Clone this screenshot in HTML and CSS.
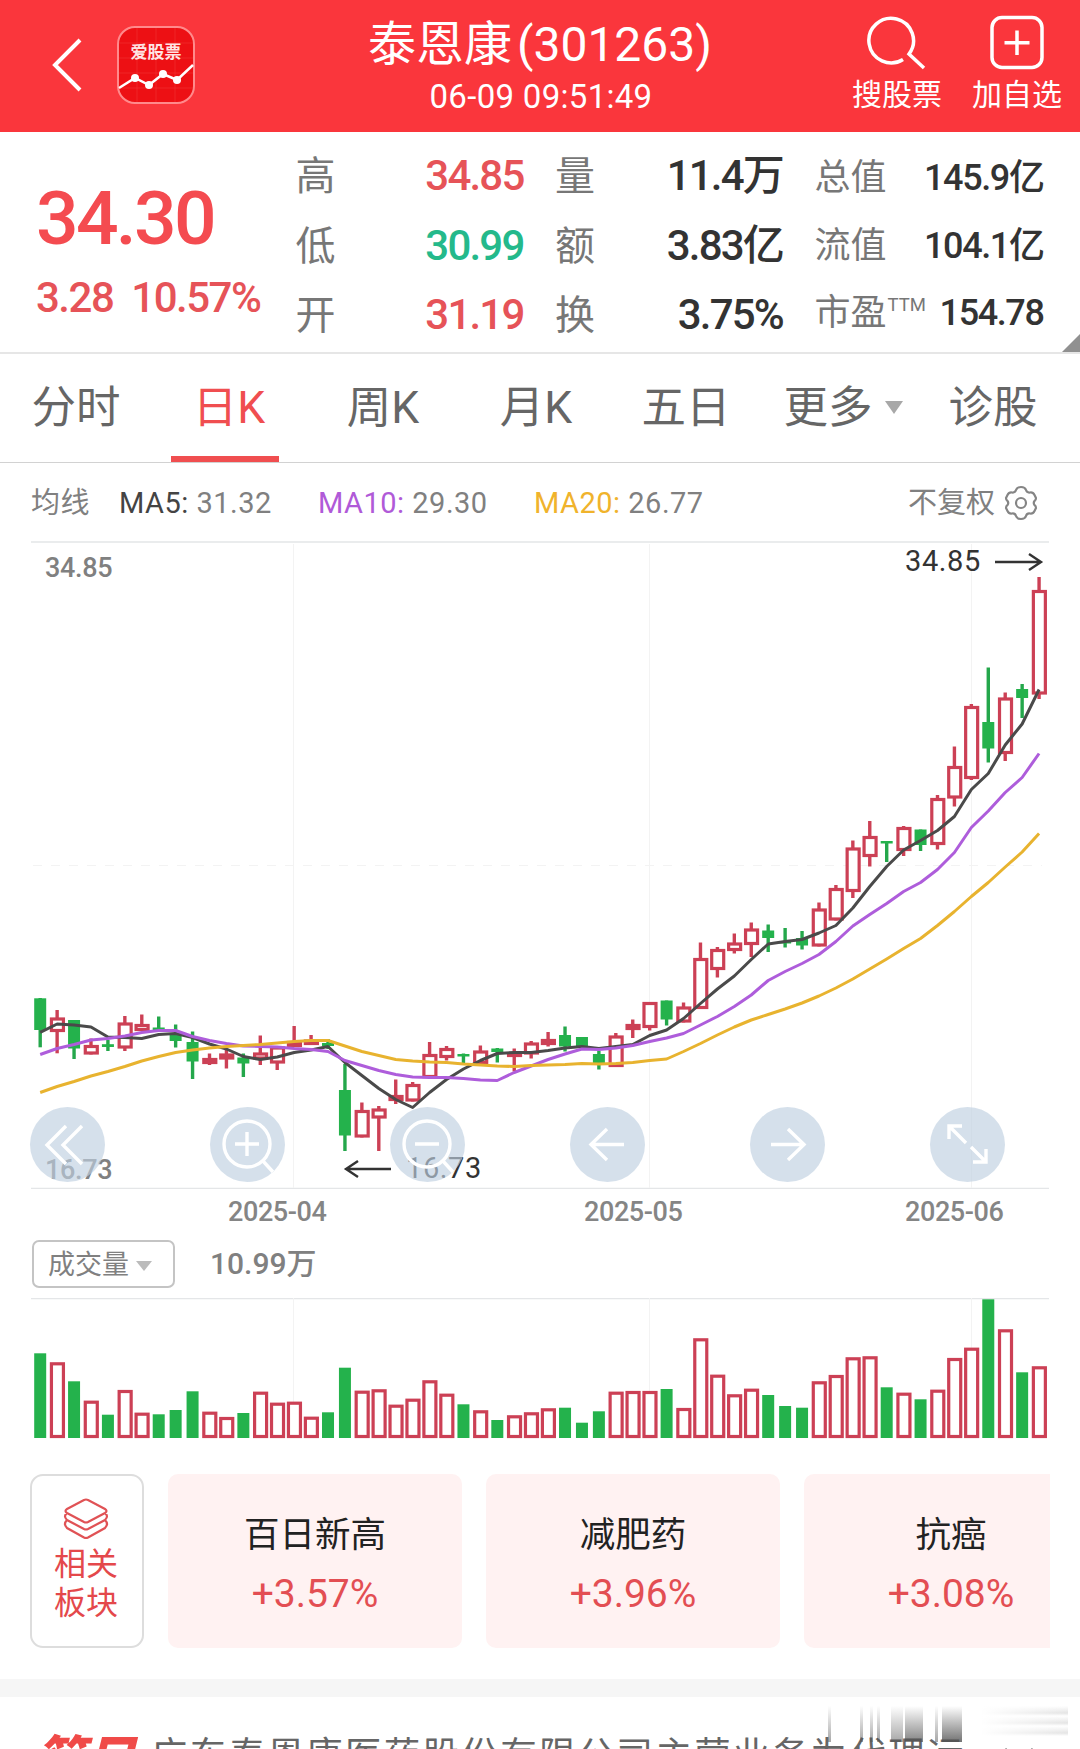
FILE: index.html
```html
<!DOCTYPE html>
<html lang="zh-CN">
	<head>
		<meta charset="utf-8">
		<title>泰恩康(301263)</title>
		<link rel="stylesheet" href="styles.css">
	</head>
	<body>
		<header class="top">
			<div class="top_left">
				<svg class="back" width="30" height="54" viewBox="0 0 30 54"><path d="M28 2L3 27L28 52"/></svg>
				<svg class="app_icon" width="78" height="78" viewBox="0 0 78 78">
					<rect class="app_bg" x="1" y="1" width="76" height="76" rx="17"/>
					<path class="app_grid" d="M20 2V76M39 2V76M58 2V76M2 17H76M2 32H76M2 47H76M2 62H76"/>
					<text x="39" y="32" text-anchor="middle">爱股票</text>
					<path class="app_line" d="M2 62L18 52L32 59L46 48L60 54L76 39"/>
					<g class="app_dots"><circle cx="18" cy="52" r="4"/><circle cx="32" cy="59" r="4"/><circle cx="46" cy="48" r="4"/><circle cx="60" cy="54" r="4"/></g>
				</svg>
			</div>
			<div class="top_title">
				<h1>泰恩康<span>(301263)</span></h1>
				<div class="time">06-09 09:51:49</div>
			</div>
			<div class="top_right">
				<div class="action">
					<svg width="60" height="60" viewBox="0 0 60 60"><path d="M36 45.500A22.300 22.300 0 1 1 42 40L57 54"/></svg>
					搜股票
				</div>
				<div class="action">
					<svg width="60" height="60" viewBox="0 0 60 60"><rect x="5" y="3.500" width="50" height="50" rx="10"/><path d="M30 16.500V41M17.500 28.700H42.500"/></svg>
					加自选
				</div>
			</div>
		</header>

		<section class="quote">
			<div class="price">
				<div class="last">34.30</div>
				<div class="change"><span>3.28</span><span>10.57%</span></div>
			</div>
			<dl>
				<div><dt>高</dt><dd class="up">34.85</dd></div>
				<div><dt>低</dt><dd class="down">30.99</dd></div>
				<div><dt>开</dt><dd class="up">31.19</dd></div>
			</dl>
			<dl>
				<div><dt>量</dt><dd>11.4万</dd></div>
				<div><dt>额</dt><dd>3.83亿</dd></div>
				<div><dt>换</dt><dd>3.75%</dd></div>
			</dl>
			<dl class="small">
				<div><dt>总值</dt><dd>145.9亿</dd></div>
				<div><dt>流值</dt><dd>104.1亿</dd></div>
				<div><dt>市盈<sup>TTM</sup></dt><dd>154.78</dd></div>
			</dl>
			<i class="corner"></i>
		</section>

		<nav class="tabs">
			<div>分时</div>
			<div class="active">日K</div>
			<div>周K</div>
			<div>月K</div>
			<div>五日</div>
			<div>更多<i class="caret"></i></div>
			<div>诊股</div>
		</nav>

		<div class="ma_row">
			<span>均线</span>
			<span><b class="ma5">MA5:</b> 31.32</span>
			<span><b class="ma10">MA10:</b> 29.30</span>
			<span><b class="ma20">MA20:</b> 26.77</span>
			<span class="adjust">不复权
				<svg width="34" height="36" viewBox="0 0 34 36"><path d="M12 5Q13 2 17 2Q21 2 22 5Q23 8 26 7.500Q29 7 30.500 10L32 13Q32 15 30.500 16Q29 18 30.500 20Q32 21 32 23L30.500 26Q29 29 26 28.500Q23 28 22 31Q21 34 17 34Q13 34 12 31Q11 28 8 28.500Q5 29 3.500 26L2 23Q2 21 3.500 20Q5 18 3.500 16Q2 15 2 13L3.500 10Q5 7 8 7.500Q11 8 12 5Z"/><circle cx="17" cy="18" r="5"/></svg>
			</span>
		</div>

		<div class="chart">
			<svg id="kline" width="1080" height="648" viewBox="0 541 1080 648">
				<path class="frame" d="M31 542H1049M31 1188.500H1049"/>
				<path class="grid" d="M293.500 544V1188M649.500 544V1188M971.500 544V1188"/>
				<path class="grid dash" d="M33 865.500H1042"/>
				<text class="axis" x="45" y="577">34.85</text>
				<text class="axis" x="45" y="1179">16.73</text>
				<g id="candles"></g>
				<g id="averages"></g>
				<text class="mark" x="905" y="571">34.85</text>
				<path class="arrow" d="M995 562H1040M1029 554L1041 562L1029 570"/>
				<text class="mark" x="406" y="1178">16.73</text>
				<path class="arrow" d="M391 1169H347M358 1161L346 1169L358 1177"/>
			</svg>
			<div class="tools">
				<svg viewBox="0 0 75 75"><path d="M36 19L17 38L36 57M52 19L33 38L52 57"/></svg>
				<svg viewBox="0 0 75 75"><circle cx="37" cy="37" r="23"/><path d="M25 37H49M37 25V49M53 54L63 65"/></svg>
				<svg viewBox="0 0 75 75"><circle cx="37" cy="37" r="23"/><path d="M25 37H49M53 54L63 65"/></svg>
				<svg viewBox="0 0 75 75"><path d="M54 37.500H21M37 22L21 37.500L37 53"/></svg>
				<svg viewBox="0 0 75 75"><path d="M21 37.500H54M38 22L54 37.500L38 53"/></svg>
				<svg viewBox="0 0 75 75"><path d="M19 32V19H32M20 20L36 36M56 42V55H43M55 54L41 40"/></svg>
			</div>
		</div>

		<div class="months"><span>2025-04</span><span>2025-05</span><span>2025-06</span></div>

		<div class="vol_head">
			<div class="select">成交量<i class="caret"></i></div>
			<span>10.99万</span>
		</div>
		<svg id="volume" width="1080" height="142" viewBox="0 0 1080 142">
			<path class="frame" d="M31 .500H1049"/>
			<path class="grid" d="M293.500 0V140M649.500 0V140M971.500 0V140"/>
		</svg>

		<section class="sectors">
			<div class="related">
				<svg width="46" height="44" viewBox="0 0 46 44"><path d="M21 3Q23 2 25 3L42 12Q45 14 42 16L25 25Q23 26 21 25L4 16Q1 14 4 12ZM4 16Q0 19 4 23L21 32Q23 33 25 32L42 23Q46 19 42 16M4 23Q0 27 4 31L21 40.500Q23 41.500 25 40.500L42 31Q46 27 42 23"/></svg>
				相关<br>板块
			</div>
			<div class="sector">百日新高<b>+3.57%</b></div>
			<div class="sector">减肥药<b>+3.96%</b></div>
			<div class="sector">抗癌<b>+3.08%</b></div>
		</section>

		<section class="brief">
			<em>简日</em>
			<p>广东泰恩康医药股份有限公司主营业务为代理运</p>
			<svg class="more" width="34" height="20" viewBox="0 0 34 20"><path d="M3 3L17 17L31 3"/></svg>
			<div class="smear"><i></i><i></i><i></i><i></i><i class="w12"></i><i class="w18"></i><i></i><i class="w20"></i><i class="tail"></i></div>
		</section>
		<script src="kline.js"></script>
	</body>
</html>
```

FILE: styles.css
```css
body {
	margin: 0;
	width: 1080px;
	height: 1749px;
	overflow: hidden;
	background: #fff;
	color: #666;
	font-family: Roboto, "Noto Sans CJK SC", sans-serif;
}

svg {
	display: block;
	fill: none;
}

.top {
	display: grid;
	grid-template-columns: 330px 420px 330px;
	height: 132px;
	background: #fa363c;
	color: #fff;
}
.top_left {
	display: flex;
	padding: 26px 0 0 52px;
}
.back {
	margin: 12px 35px 0 0;
	stroke: #fff;
	stroke-width: 4;
}
.app_bg {
	fill: #ed1014;
	stroke: #ff8a8c;
	stroke-width: 2;
}
.app_grid {
	stroke: #f5383a;
	stroke-width: 1;
	opacity: .5;
}
.app_icon text {
	fill: #ffe4e4;
	font-size: 17px;
	font-weight: bold;
}
.app_line {
	stroke: #fff;
	stroke-width: 2.5;
}
.app_dots {
	fill: #fff;
}
.top_title {
	text-align: center;
	white-space: nowrap;
}
h1 {
	margin: 0;
	padding-top: 9px;
	font-size: 48px;
	font-weight: normal;
	line-height: 71px;
}
h1 span {
	margin-left: 5px;
}
.time {
	font-size: 33px;
	line-height: 34px;
	letter-spacing: .3px;
	padding-left: 2px;
}
.top_right {
	display: flex;
	justify-content: flex-end;
	gap: 30px;
	padding: 14px 18px 0 0;
}
.action {
	width: 90px;
	font-size: 30px;
	line-height: 42px;
	white-space: nowrap;
}
.action svg {
	margin: 0 auto;
	stroke: #fff;
	stroke-width: 3.5;
}

.quote {
	position: relative;
	display: grid;
	grid-template-columns: 227px 227px 227px 228px;
	column-gap: 32.5px;
	height: 220px;
	padding-left: 36px;
	border-bottom: 2px solid #e6e6e6;
}
.price {
	padding-top: 41px;
	color: #f44b50;
	font-weight: 500;
	white-space: nowrap;
}
.last {
	font-size: 75px;
	line-height: 90px;
	letter-spacing: -2.7px;
}
.change {
	display: flex;
	gap: 18px;
	margin-top: 10px;
	font-size: 42px;
	line-height: 50px;
	letter-spacing: -1.5px;
	color: #e65358;
}
dl {
	margin: 0;
	padding-top: 9px;
	font-size: 42px;
	line-height: 69px;
}
dl div {
	display: flex;
	justify-content: space-between;
	align-items: baseline;
	height: 69.5px;
	white-space: nowrap;
}
dt {
	font-size: 40px;
	color: #777;
}
dd {
	margin: 0;
	color: #333;
	font-weight: 500;
	letter-spacing: -1.8px;
	margin-right: -1px;
}
.up {
	color: #e65358;
}
.down {
	color: #24b98b;
}
.small {
	padding-top: 13px;
	font-size: 36px;
	line-height: 67.5px;
}
.small div {
	height: 67.5px;
}
.small dt {
	font-size: 36px;
}
.small dd {
	letter-spacing: -1.4px;
}
sup {
	font-size: 18.5px;
	line-height: 0;
	vertical-align: 14px;
	margin-left: 1px;
}
.corner {
	position: absolute;
	right: 0;
	bottom: 0;
	border-left: 18px solid transparent;
	border-bottom: 18px solid #909090;
}

.tabs {
	display: grid;
	grid-template-columns: 152px 146px 170px 136px 164px 150px 150px;
	height: 108px;
	border-bottom: 1px solid #d2d2d2;
	font-size: 44.5px;
	line-height: 108px;
	text-align: center;
	white-space: nowrap;
}
.tabs .active {
	justify-self: center;
	width: 100px;
	padding-left: 8px;
	height: 102px;
	border-bottom: 6px solid #f04e50;
	color: #f04e50;
}
.caret {
	display: inline-block;
	margin-left: 12px;
	vertical-align: 9px;
	border: 9px solid transparent;
	border-top: 13px solid #a8a8a8;
	border-bottom: 0;
}

.ma_row {
	display: grid;
	grid-template-columns: 88px 199px 216px 1fr auto;
	padding: 0 42px 0 31px;
	height: 78px;
	font-size: 29px;
	line-height: 80px;
	letter-spacing: .5px;
	color: #808080;
	white-space: nowrap;
}
.ma_row b {
	font-weight: normal;
}
.ma5 {
	color: #444;
}
.ma10 {
	color: #b05ad8;
}
.ma20 {
	color: #f0b32c;
}
.adjust {
	display: flex;
	align-items: center;
	gap: 9px;
	letter-spacing: 0;
}
.adjust svg {
	stroke: #858585;
	stroke-width: 2.2;
}

.chart {
	position: relative;
}
.frame {
	stroke: #e4e6e8;
	stroke-width: 1.5;
}
.grid {
	stroke: #f3f3f3;
}
.dash {
	stroke-dasharray: 9 9;
}
.axis {
	fill: #808080;
	font-size: 27px;
	font-weight: 500;
	letter-spacing: -.3px;
}
.mark {
	fill: #333;
	font-size: 29px;
	letter-spacing: .6px;
}
.arrow {
	stroke: #333;
	stroke-width: 2.4;
}
.rise {
	stroke: #cc4055;
	stroke-width: 3.2;
	fill: #fff;
}
.fall {
	fill: #24b24c;
}
.wick_rise {
	stroke: #cc4055;
	stroke-width: 3.4;
}
.wick_fall {
	stroke: #24a74b;
	stroke-width: 3.4;
}
.line5, .line10, .line20 {
	fill: none;
	stroke-width: 3;
	stroke-linejoin: round;
	stroke: #4a4a4a;
}
.line10 {
	stroke: #ae5ddb;
}
.line20 {
	stroke: #e8b32f;
}
.tools {
	position: absolute;
	left: 30px;
	top: 566px;
	display: flex;
	gap: 105px;
}
.tools svg {
	width: 75px;
	height: 75px;
	border-radius: 50%;
	background: rgba(190, 207, 224, .65);
	stroke: #fff;
	stroke-width: 3.4;
}

.months {
	display: grid;
	grid-template-columns: 356px 321px 97px;
	padding-left: 228px;
	height: 51px;
	font-size: 27px;
	font-weight: 500;
	line-height: 46px;
	letter-spacing: -.4px;
	color: #858585;
	white-space: nowrap;
}
.vol_head {
	display: flex;
	gap: 35px;
	height: 58px;
	padding-left: 32px;
	font-size: 30px;
	font-weight: 500;
	line-height: 47px;
	color: #808080;
}
.select {
	box-sizing: border-box;
	width: 143px;
	height: 48px;
	padding-left: 14px;
	border: 2px solid #c4c4c4;
	border-radius: 7px;
	font-size: 27px;
	font-weight: normal;
	white-space: nowrap;
}
.select .caret {
	margin-left: 7px;
	vertical-align: 3px;
	border-width: 10px 8px 0;
	border-top-color: #bbb;
}

.sectors {
	display: flex;
	gap: 24px;
	margin: 34px 30px 31px;
	height: 174px;
	overflow: hidden;
	font-size: 35.5px;
}
.related {
	box-sizing: border-box;
	flex: none;
	width: 114px;
	padding-top: 21px;
	padding-right: 2px;
	border: 2px solid #ddd;
	border-radius: 13px;
	font-size: 32px;
	line-height: 39px;
	text-align: center;
	color: #e4484b;
}
.related svg {
	margin: 0 auto 4px;
	stroke: #e05255;
	stroke-width: 2.2;
}
.sector {
	flex: none;
	width: 294px;
	padding-top: 36px;
	box-sizing: border-box;
	border-radius: 10px;
	background: #fff2f2;
	text-align: center;
	line-height: 50px;
	color: #222;
}
.sector b {
	display: block;
	margin-top: 9px;
	font-size: 39px;
	font-weight: normal;
	color: #e34e53;
}

.brief {
	position: relative;
	display: flex;
	height: 53px;
	border-top: 18px solid #f6f6f6;
	padding-left: 35px;
	overflow: hidden;
	white-space: nowrap;
	line-height: 80px;
}
.brief em {
	width: 116px;
	padding-top: 23px;
	font-size: 50px;
	font-weight: 900;
	color: #f04a48;
}
.brief p {
	margin: 0;
	padding-top: 19px;
	font-size: 36.5px;
	letter-spacing: 2.3px;
}
.more {
	margin: 49px 0 0 36px;
	stroke: #777;
	stroke-width: 3;
}
/* fade streaks over the end of the line */
.smear {
	position: absolute;
	left: 828px;
	top: 9px;
	display: grid;
	grid-template-columns: 32px 10px 7px 14px 14px 30px 7px 23px 103px;
	height: 36px;
}
.smear i {
	width: 3px;
	background: linear-gradient(rgba(80, 80, 80, 0), rgba(80, 80, 80, .5));
}
.smear .w12 {
	width: 12px;
}
.smear .w18 {
	width: 18px;
	background: linear-gradient(rgba(80, 80, 80, 0), rgba(80, 80, 80, .7));
}
.smear .w20 {
	width: 20px;
	background: linear-gradient(rgba(80, 80, 80, 0), rgba(80, 80, 80, .8));
}
.smear .tail {
	width: 103px;
	height: 30px;
	background: linear-gradient(90deg, #fff 15%, rgba(255, 255, 255, .2)), repeating-linear-gradient(#fff 0, #ddd 7px, #fff 10px);
}
```

FILE: kline.js
```js
// [direction, high, body top, body bottom, low, volume]
var days = [
	[0, 998, 998.3, 1030, 1047.3, 84.7], [1, 1010, 1017.5, 1032, 1053.3, 75.7],
	[0, 1020, 1020, 1048.5, 1059, 56.7], [1, 1038.5, 1045, 1054.5, 1054.5, 37.3],
	[0, 1040, 1044.2, 1047, 1051, 23.3], [1, 1016, 1022.5, 1048.5, 1051, 48],
	[1, 1014.5, 1024, 1031, 1031, 25.3], [0, 1016.5, 1027.5, 1030, 1030, 23.7],
	[0, 1024.5, 1033.5, 1041, 1047.5, 28], [0, 1031.5, 1042, 1061.5, 1079, 46.7],
	[1, 1053.5, 1058, 1064, 1065, 26.3], [1, 1050, 1053.5, 1059.5, 1068.5, 21],
	[0, 1053.5, 1057.5, 1063.5, 1077, 25], [1, 1035.5, 1052.5, 1059.5, 1065, 46.3],
	[1, 1046, 1046.5, 1063.5, 1070, 35.3], [1, 1026, 1041, 1047, 1047, 36.3],
	[1, 1035, 1039.5, 1045, 1045, 21.3], [0, 1039, 1043, 1046, 1049, 25.7],
	[0, 1064, 1090, 1135.5, 1151, 70.3], [1, 1102.5, 1110, 1137.5, 1137.5, 47.3],
	[1, 1106, 1108.5, 1118.5, 1151, 48.7], [1, 1079.5, 1095, 1101, 1104, 33.3],
	[1, 1082, 1084, 1101.5, 1101.5, 39.3], [1, 1042, 1054, 1078, 1078, 57.7],
	[1, 1046, 1048, 1058, 1060.5, 44.3], [0, 1053.5, 1054, 1056.5, 1063.5, 33.7],
	[1, 1045.5, 1050.5, 1064, 1064, 27.7], [0, 1048, 1048.5, 1052, 1062.5, 18],
	[1, 1048.5, 1053, 1057, 1071.5, 22.7], [1, 1041, 1042.5, 1054.5, 1058.5, 25.7],
	[1, 1032, 1039, 1045, 1046.5, 29.7], [0, 1026.5, 1035, 1046.5, 1051.5, 30.3],
	[0, 1037, 1037, 1046.5, 1046.5, 15.3], [0, 1051, 1054, 1063.5, 1069.5, 26.7],
	[1, 1033, 1035.5, 1067, 1067, 46.3], [1, 1019.5, 1024, 1030, 1038, 47],
	[1, 1002, 1002, 1028, 1030.5, 47], [0, 1000.5, 1000.5, 1019.5, 1025.5, 49],
	[1, 1002.5, 1006.5, 1022.5, 1022.5, 30], [1, 942.5, 958, 1009, 1009, 99.7],
	[1, 947, 949, 970, 977.5, 63.3], [1, 933.5, 942.5, 951, 953.5, 43.7],
	[1, 922.5, 928.5, 945, 957, 49.3], [0, 924.5, 930.5, 938, 952, 43],
	[0, 928, 941, 943.5, 947.5, 32], [0, 931, 938, 945.5, 949.5, 30.3],
	[1, 902.5, 908.5, 946.5, 946.5, 56.7], [1, 885, 888, 920.5, 920.5, 63],
	[1, 840.5, 847.5, 892, 898, 80.7], [1, 821, 836, 857, 866.5, 81.7],
	[0, 841, 841, 843.5, 862, 50.7], [1, 826, 827, 851, 856, 45.3],
	[0, 829.5, 829.5, 845, 851, 38.7], [1, 795, 798, 845, 849.5, 48.3],
	[1, 746.5, 766, 798.5, 806.5, 80], [1, 704, 706, 779, 780, 90.3],
	[0, 667.5, 722, 748.5, 762.5, 138.7], [1, 692.5, 697.5, 754, 761, 108.7],
	[0, 684, 689, 698, 718, 65.7], [1, 577, 590, 694.5, 699, 71.7]
];

var averages = {
	line5: [1032.3, 1024, 1025, 1027, 1037, 1037.5, 1038.5, 1034.5, 1033.5, 1037.5, 1044, 1049, 1056.5, 1059.5, 1057, 1052.5, 1050, 1046.5, 1062.5, 1075.5, 1088.5, 1099.5, 1107.5, 1092.5, 1079.5, 1069, 1060.5, 1053.5, 1052.5, 1052.5, 1050.5, 1048, 1046.5, 1048.5, 1046.5, 1044.5, 1035.5, 1030, 1018.5, 1003.5, 989, 976, 959.5, 944, 941.5, 939.5, 933, 925.5, 908, 886.5, 866.5, 850, 840.5, 830.5, 816.5, 789.5, 773.5, 745, 724, 689.5],
	line10: [1054.5, 1048.5, 1044.5, 1040, 1038.5, 1036, 1032.5, 1030.5, 1030.5, 1036.5, 1040.5, 1043.5, 1046, 1046.5, 1047, 1048.5, 1049.5, 1051.5, 1060.5, 1065.5, 1070.5, 1074.5, 1077, 1077.5, 1077.5, 1078.5, 1080, 1080.5, 1072.5, 1066, 1059.5, 1054, 1049, 1049.5, 1048, 1045.5, 1041.5, 1038, 1033.5, 1025, 1016.5, 1006.5, 995, 980.5, 971.5, 963.5, 954.5, 941.5, 926, 914.5, 903.5, 891.5, 882.5, 869.5, 852.5, 827.5, 811, 792.5, 777.5, 753.5],
	line20: [1092.5, 1086.5, 1081.5, 1076, 1071.5, 1066.5, 1061, 1056.5, 1052.5, 1050, 1048, 1046.5, 1045.5, 1044.5, 1043, 1041.5, 1040.5, 1040.5, 1046, 1051.5, 1055.5, 1059.5, 1061, 1062, 1062.5, 1064, 1065, 1066, 1066.5, 1065.5, 1065, 1064.5, 1063.5, 1064, 1063.5, 1062.5, 1060.5, 1059, 1051.5, 1043.5, 1035, 1027, 1020, 1014.5, 1009, 1003, 996, 988, 979, 969, 959, 948.5, 938.5, 925.5, 911.5, 896.5, 882.5, 867, 852, 833.5]
};

function add(parent, tag, attrs) {
	var el = document.createElementNS("http://www.w3.org/2000/svg", tag);
	for (var key in attrs)
		el.setAttribute(key, attrs[key]);
	parent.appendChild(el);
}

function xOf(i) {
	return 40.2 + i * 16.93;
}

function bar(parent, x, rise, top, bottom) {
	if (rise)
		add(parent, "rect", {class: "rise", x: x - 5.7, y: top + 1.5, width: 12, height: Math.max(bottom - top - 3, 1)});
	else
		add(parent, "rect", {class: "fall", x: x - 6, y: top, width: 12, height: bottom - top});
}

var candles = document.getElementById("candles");
var volume = document.getElementById("volume");
days.forEach(function(d, i) {
	var x = xOf(i);
	add(candles, "path", {class: d[0] ? "wick_rise" : "wick_fall", d: "M" + x + " " + d[1] + "V" + d[4]});
	bar(candles, x, d[0], d[2], d[3]);
	bar(volume, x, d[0], 140 - d[5], 140);
});

for (var name in averages) {
	var points = averages[name].map((y, i) => xOf(i) + "," + y).join(" ");
	add(document.getElementById("averages"), "polyline", {class: name, points: points});
}
```
